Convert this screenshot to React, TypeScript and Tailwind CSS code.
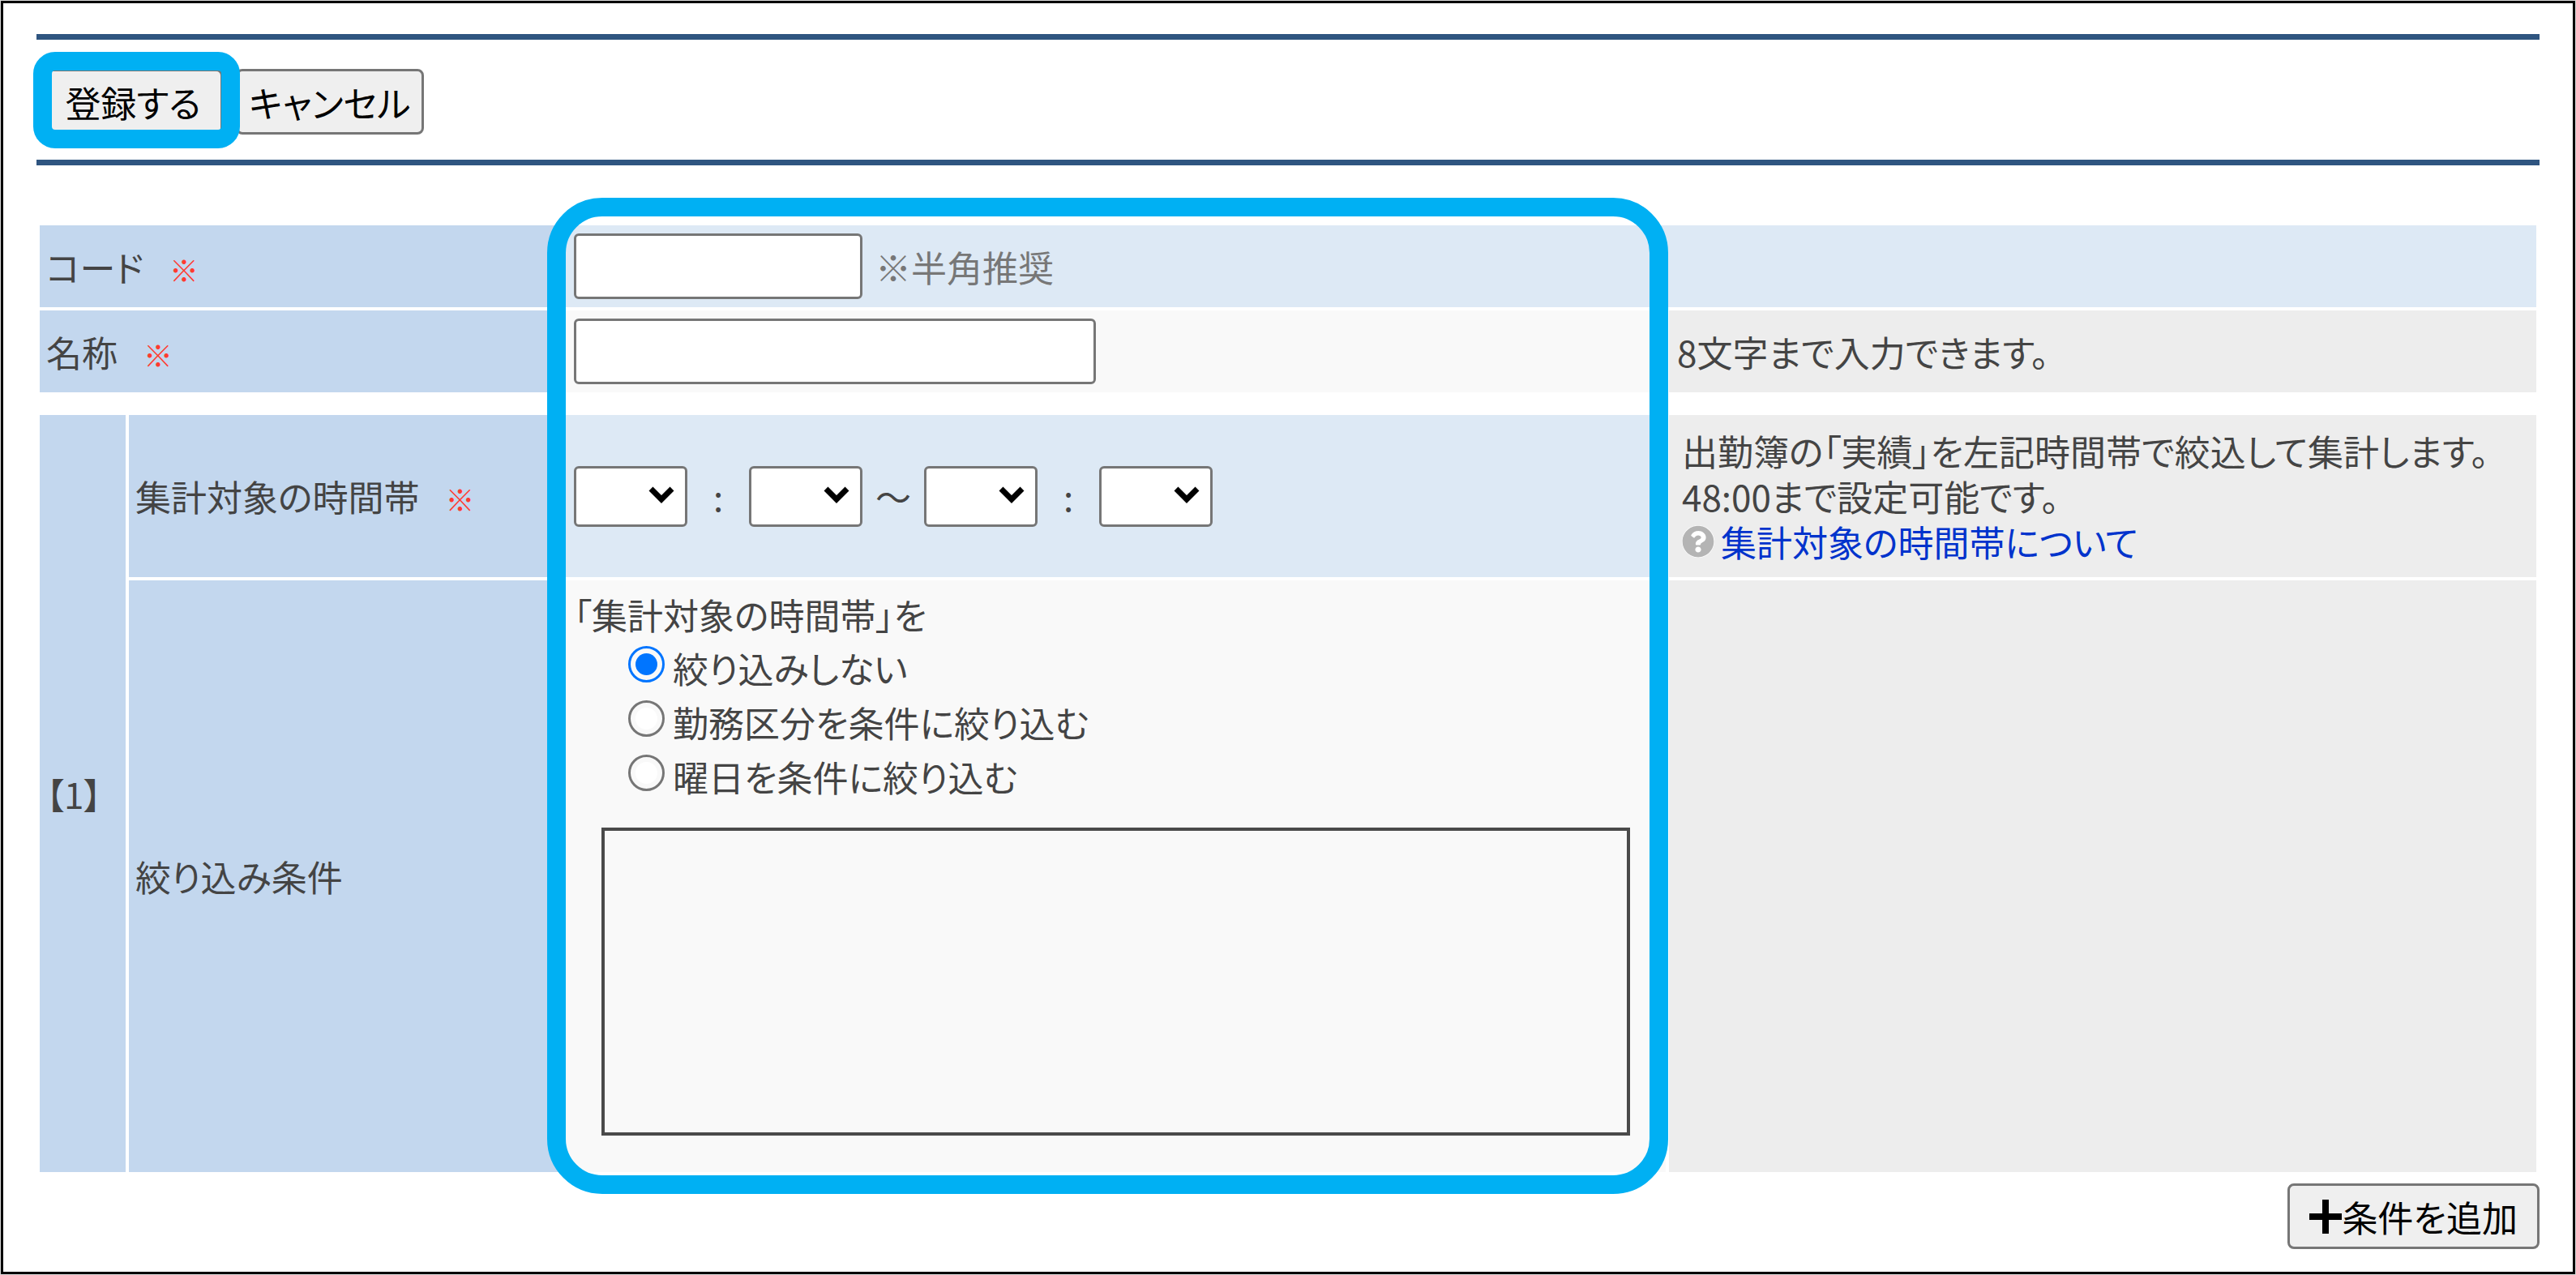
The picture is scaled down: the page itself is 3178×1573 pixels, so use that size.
import type { ReactNode } from "react"
import { FaQuestionCircle } from "react-icons/fa"

/** 必須マーク */
function Required() {
  return <span className="ml-8 text-4xl text-[#ff3b30]">※</span>
}

/** 標準ボタン */
function Button({ children, className = "" }: { children: ReactNode; className?: string }) {
  return (
    <button
      type="button"
      className={`flex h-[81px] items-center justify-center rounded-lg border-3 border-[#767676] bg-[#efefef] text-black ${className}`}
    >
      {children}
    </button>
  )
}

/** 見出しセル */
function LabelCell({
  children,
  rowSpan,
  htmlFor,
}: {
  children: ReactNode
  rowSpan?: number
  htmlFor?: string
}) {
  return (
    <th scope="row" rowSpan={rowSpan} className="bg-[#c3d7ee] px-2 text-left font-normal">
      {htmlFor ? <label htmlFor={htmlFor}>{children}</label> : children}
    </th>
  )
}

/** 時・分のプルダウン */
function TimeSelect({ label, id, count }: { label: string; id?: string; count: number }) {
  return (
    <div className="relative">
      <select
        id={id}
        aria-label={label}
        defaultValue=""
        className="block h-[75px] w-[140px] appearance-none rounded-md border-3 border-[#767676] bg-white px-2"
      >
        <option value=""></option>
        {Array.from({ length: count }, (_, i) => (
          <option key={i} value={i}>
            {String(i).padStart(2, "0")}
          </option>
        ))}
      </select>
      <svg
        viewBox="0 0 32 24"
        className="pointer-events-none absolute top-6 right-4 h-6 w-8"
        fill="none"
        stroke="#000"
        strokeWidth="7"
      >
        <path d="M3 4 16 17 29 4" />
      </svg>
    </div>
  )
}

const FILTERS = [
  { value: "none", label: "絞り込みしない" },
  { value: "work", label: "勤務区分を条件に絞り込む" },
  { value: "day", label: "曜日を条件に絞り込む" },
]

/** 絞り込み条件の選択肢 */
function FilterOptions() {
  return (
    <fieldset>
      <legend className="leading-14">「集計対象の時間帯」を</legend>
      {FILTERS.map((f) => (
        <div key={f.value} className="ml-[67px] flex h-[67px] items-center gap-2.5">
          <input
            type="radio"
            id={`filter-${f.value}`}
            name="filter"
            value={f.value}
            defaultChecked={f.value === "none"}
            className="size-[45px] appearance-none rounded-full border-3 border-[#767676] bg-white bg-clip-content p-1.5 checked:border-[#0075ff] checked:bg-[#0075ff]"
          />
          <label htmlFor={`filter-${f.value}`} className="pt-2">
            {f.label}
          </label>
        </div>
      ))}
    </fieldset>
  )
}

/** 注目箇所の枠 */
function Highlight({ className }: { className: string }) {
  return (
    <div
      aria-hidden="true"
      className={`pointer-events-none absolute border-[23px] border-[#00b0f3] ${className}`}
    />
  )
}

const TABLE = "w-full table-fixed border-separate border-spacing-1"
const INPUT = "h-[81px] rounded-md border-3 border-[#767676] bg-white px-3"

export default function App() {
  return (
    <div className="flex min-h-screen bg-[#d9d9d9] p-px font-['Noto_Sans_CJK_JP',sans-serif] text-[44px] leading-14 text-[#444] [font-feature-settings:'palt']">
      <form className="flex-1 border-3 border-black bg-white px-[41px] pt-[38px] pb-7">
        <div className="flex gap-4 border-y-[7px] border-[#2f5580] px-2 pt-9 pb-[31px]">
          <div className="relative">
            <Button className="w-[222px]">登録する</Button>
            <Highlight className="-top-[21px] -right-[21px] -bottom-[17px] -left-3 z-10 rounded-[27px]" />
          </div>
          <Button className="w-[232px]">キャンセル</Button>
        </div>

        <div className="relative mt-[70px] flex flex-col gap-5">
          <table className={TABLE}>
            <colgroup>
              <col className="w-[641px]" />
              <col />
              <col className="w-[1070px]" />
            </colgroup>
            <tbody>
              <tr>
                <LabelCell htmlFor="code">
                  コード
                  <Required />
                </LabelCell>
                <td colSpan={2} className="bg-[#dde9f5] px-3.5 py-2.5">
                  <div className="flex items-center gap-4">
                    <input id="code" type="text" className={`w-[356px] ${INPUT}`} />
                    <span className="text-[#777]">※半角推奨</span>
                  </div>
                </td>
              </tr>
              <tr>
                <LabelCell htmlFor="name">
                  名称
                  <Required />
                </LabelCell>
                <td className="bg-[#f9f9f9] px-3.5 py-2.5">
                  <input id="name" type="text" maxLength={8} className={`block w-[644px] ${INPUT}`} />
                </td>
                <td className="bg-[#ededed] px-2.5">8文字まで入力できます。</td>
              </tr>
            </tbody>
          </table>

          <table className={TABLE}>
            <colgroup>
              <col className="w-[106px]" />
              <col className="w-[531px]" />
              <col />
              <col className="w-[1070px]" />
            </colgroup>
            <tbody>
              <tr className="h-[200px]">
                <LabelCell rowSpan={2}>【1】</LabelCell>
                <LabelCell htmlFor="start-hour">
                  集計対象の時間帯
                  <Required />
                </LabelCell>
                <td className="bg-[#dde9f5] px-3.5">
                  <div className="flex items-center">
                    <TimeSelect id="start-hour" label="開始時" count={49} />
                    <span className="w-[76px] text-center">:</span>
                    <TimeSelect label="開始分" count={60} />
                    <span className="w-[76px] text-center">～</span>
                    <TimeSelect label="終了時" count={49} />
                    <span className="w-[76px] text-center">:</span>
                    <TimeSelect label="終了分" count={60} />
                  </div>
                </td>
                <td className="bg-[#ededed] px-4">
                  <p>出勤簿の「実績」を左記時間帯で絞込して集計します。</p>
                  <p>48:00まで設定可能です。</p>
                  <a href="#help" className="flex items-center gap-2 text-[#0033cc]">
                    <FaQuestionCircle className="size-10 rounded-full bg-white text-[#b4b4b4]" />
                    集計対象の時間帯について
                  </a>
                </td>
              </tr>
              <tr>
                <LabelCell>絞り込み条件</LabelCell>
                <td className="bg-[#f9f9f9] pt-3.5 pr-11 pb-[45px] pl-3.5">
                  <FilterOptions />
                  <div className="mt-[34px] ml-[34px] h-[380px] border-4 border-[#4a4a4a]" />
                </td>
                <td className="bg-[#ededed]" />
              </tr>
            </tbody>
          </table>

          <Highlight className="-top-[30px] right-[1075px] -bottom-[23px] left-[630px] rounded-[68px]" />
        </div>

        <div className="mt-2.5 flex justify-end">
          <Button className="px-6">
            <svg viewBox="0 0 40 42" className="h-[42px] w-10" stroke="#000" strokeWidth="8">
              <path d="M0 21H40M20 0V42" />
            </svg>
            条件を追加
          </Button>
        </div>
      </form>
    </div>
  )
}
